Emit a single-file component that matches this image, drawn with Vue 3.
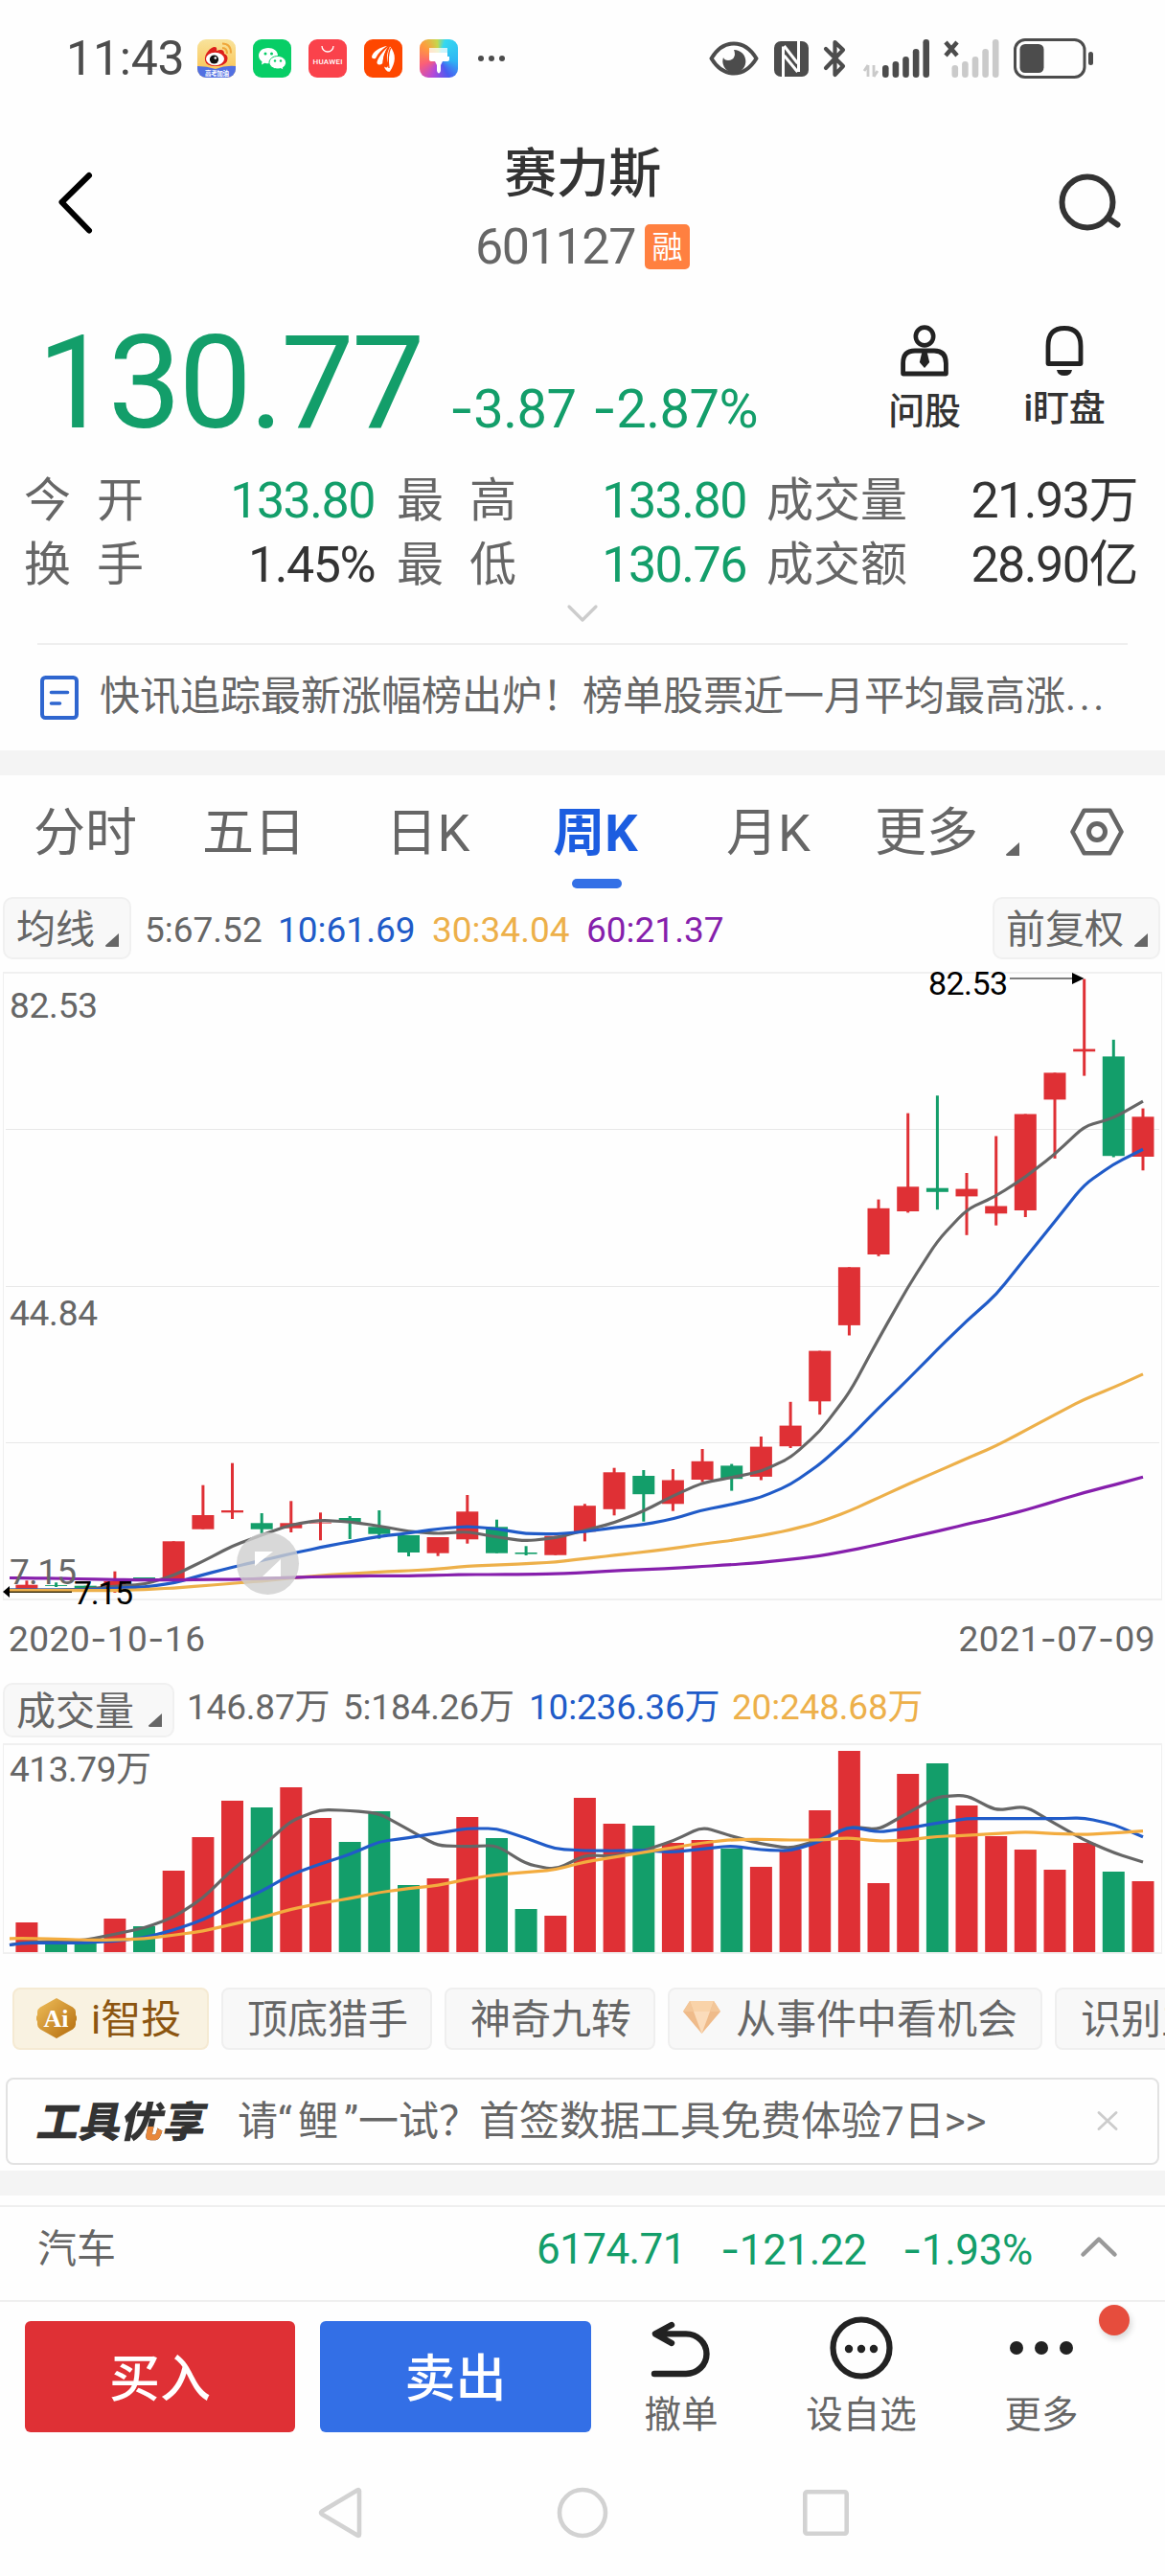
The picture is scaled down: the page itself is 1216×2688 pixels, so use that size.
<script setup>
import { h } from 'vue'

/* Figures: the minus sign is drawn with a wider dash than the digits' own font has. */
const Num = (props) =>
  h('span', { class: 'num' }, props.v.split(/(-)/).filter(Boolean).map((s) => (s === '-' ? h('span', { class: 'num-dash' }, s) : s)))
Num.props = ['v']

const RED = '#df3035'
const GREEN = '#139e6a'
const STEP = 30.66
const X0 = 27.9
const cx = (i) => +(X0 + i * STEP).toFixed(1)

/* colour, body top, body bottom, wick top, wick bottom */
const candles = [
  ['r', 639.7, 644, 635.3, 644], ['g', 640, 640.9, 637.3, 642], ['g', 640.7, 643, 640.7, 643],
  ['r', 636, 642.7, 625.7, 648], ['g', 632, 633.4, 632, 633], ['r', 594.3, 634, 594.3, 634],
  ['r', 567, 581.7, 535.7, 581.7], ['r', 562, 564.3, 512.7, 571], ['g', 575.3, 581.7, 565, 586],
  ['r', 575.3, 580.7, 552.3, 585], ['r', 574.7, 575.6, 564.3, 593.3], ['g', 570, 574.7, 568, 592],
  ['g', 579.3, 586.7, 562, 591.7], ['g', 588, 606, 588, 610], ['r', 590, 606.7, 590, 609.7],
  ['r', 563.3, 592.3, 546, 596.7], ['g', 579.3, 606.7, 571.7, 606.7], ['g', 606, 607.6, 599.3, 609],
  ['r', 588.7, 608.7, 588.7, 608.7], ['r', 557.2, 584.3, 555.3, 594.4], ['r', 522.3, 560.8, 517.7, 567.3],
  ['g', 526, 545.2, 520, 573.7], ['r', 530.5, 555.3, 519, 562.7], ['r', 510.8, 530, 498, 532.4],
  ['g', 515.4, 529.2, 513.6, 541.6], ['r', 495.6, 526.9, 485, 530.5], ['r', 473.6, 495.2, 448.8, 497],
  ['r', 395.6, 448.3, 395.6, 462.1], ['r', 308.3, 368.9, 308.3, 379.5], ['r', 246.8, 295, 237.6, 296.8],
  ['r', 224.3, 250, 147.6, 251.4], ['g', 225.7, 229.8, 129.2, 248.2], ['r', 226.6, 234.4, 210, 274.8],
  ['r', 244.5, 252.3, 171.5, 264.7], ['r', 148.5, 249, 148.5, 256], ['r', 105.4, 133.4, 105.4, 194.9],
  ['r', 80.6, 83.3, 7.6, 108.6], ['g', 88.4, 192.2, 70.9, 193.5], ['r', 151.3, 193, 142.6, 207.3],
].map(([c, top, bottom, high, low], i) => ({ color: c === 'r' ? RED : GREEN, top, bottom, high, low, x: cx(i) }))

/* Line through the points with slightly rounded corners. */
function curve(ys, startY) {
  const pts = [[10, startY], ...ys.map((y, i) => [cx(i), y])]
  const t = 0.3
  const mix = (a, b) => [a[0] + (b[0] - a[0]) * t, a[1] + (b[1] - a[1]) * t].map((n) => n.toFixed(1)).join(' ')
  let d = `M${pts[0].join(' ')}`
  for (let i = 1; i < pts.length - 1; i++) {
    d += `L${mix(pts[i], pts[i - 1])}Q${pts[i].join(' ')} ${mix(pts[i], pts[i + 1])}`
  }
  return d + `L${pts[pts.length - 1].join(' ')}`
}

const priceLines = [
  { color: '#666666', d: curve([645, 645, 644.3, 641.3, 639.3, 630, 615, 599.3, 587.7, 577, 572.3, 574, 578.3, 584, 586.3, 584.3, 590, 594, 590.7, 582.9, 575, 562.7, 547, 533.3, 527.8, 521.4, 507.1, 479.6, 439.6, 383.2, 329, 280.8, 248.2, 233.9, 214.2, 190.3, 161.4, 152.7, 135.2], 645) },
  { color: '#205bc8', d: curve([645, 645, 645, 643.3, 642, 638, 629.3, 621.3, 614.3, 607.3, 600.7, 594.7, 589.3, 585.7, 581.3, 578.7, 581.3, 586.3, 586.7, 584.3, 580.1, 576.9, 570.9, 561.8, 555.8, 548.4, 535.1, 514, 486.5, 455.2, 425.4, 394.2, 364.3, 337.2, 298.7, 260.6, 222, 200.9, 185.3], 645) },
  { color: '#edb04a', d: curve([645.7, 645.7, 645.7, 645.7, 644.7, 643, 640.7, 638.3, 635.7, 632.7, 630, 628, 626.3, 625, 623.3, 620.3, 619, 617.7, 616, 612.3, 609, 605.4, 601.7, 597.1, 593.4, 588.4, 582.4, 574.2, 562.7, 548.9, 534.7, 521.4, 508, 494.7, 478.7, 462.1, 446.1, 433.7, 419.9], 645.7) },
  { color: '#861fac', d: curve([632.8, 633, 633.7, 634.3, 634.7, 634.7, 634.3, 634, 633.3, 632, 631.3, 630.7, 630.3, 630.3, 629.7, 629, 629, 628.7, 628.3, 626.9, 625.1, 623.8, 622.4, 620.5, 618.7, 616.4, 613.2, 609.5, 604, 597.6, 590.7, 583.8, 576.5, 569.6, 561.8, 552.6, 543.4, 535.6, 527.3], 632.5) },
]

const volTops = [186, 205, 206, 182, 190, 132, 97, 59, 66, 45, 77, 102, 70, 147, 140, 76, 98, 172, 179, 56, 83, 85, 103, 100, 109, 128, 110, 69, 7, 145, 31, 20, 64, 96, 110, 131, 103, 133, 143]
const volumes = volTops.map((top, i) => ({ top, x: cx(i), color: candles[i].color }))
const scale = (a) => a.map((v) => +(v / 3 - 80).toFixed(1))
const volLines = [
  { color: '#666666', d: curve(scale([860, 858, 853, 835, 815, 782, 722, 632, 562, 480, 445, 448, 457, 508, 558, 560, 557, 615, 633, 588, 590, 573, 543, 499, 528, 552, 566, 540, 497, 508, 455, 404, 400, 448, 434, 488, 540, 580, 609]), 209.5) },
  { color: '#205bc8', d: curve(scale([862, 862, 862, 856, 846, 822, 790, 742, 700, 648, 615, 585, 545, 533, 518, 504, 504, 534, 568, 573, 574, 572, 578, 568, 558, 571, 574, 545, 497, 516, 503, 487, 473, 473, 473, 473, 471, 491, 530]), 209.5) },
  { color: '#f3ac3f', d: curve(scale([848, 850, 853, 853, 849, 838, 825, 804, 783, 757, 738, 723, 704, 692, 682, 663, 648, 641, 633, 608, 594, 578, 564, 549, 539, 538, 540, 540, 533, 544, 540, 529, 526, 520, 515, 520, 523, 518, 512]), 202.8) },
]

const stats = [
  ['今开', '133.80', 'green'], ['最高', '133.80', 'green'], ['成交量', '21.93万', 'dark'],
  ['换手', '1.45%', 'dark'], ['最低', '130.76', 'green'], ['成交额', '28.90亿', 'dark'],
]
const bars = [[0, 27], [10.6, 23], [21.2, 18], [31.8, 10], [42.4, 0]]
</script>

<template>
  <div class="app">
    <div class="status">
      <span class="clock">11:43</span>
      <div class="apps">
        <svg width="40" height="40" viewBox="0 0 40 40">
          <defs>
            <clipPath id="wb"><rect width="40" height="40" rx="9" /></clipPath>
            <linearGradient id="wbg" x2="0" y2="1"><stop stop-color="#f8e39c" /><stop offset="1" stop-color="#fbc04a" /></linearGradient>
          </defs>
          <g clip-path="url(#wb)">
            <rect width="40" height="40" fill="url(#wbg)" />
            <path d="M8 22C7 15 14 8 18 8q3 0 2 4 8-3 8 3 5 2 3 8-3 5-12 5-10 0-11-6z" fill="#dd1f1b" />
            <ellipse cx="18.500" cy="20.500" rx="9.500" ry="6.800" fill="#fff" />
            <circle cx="17.500" cy="21" r="4.600" fill="#111" /><circle cx="18.800" cy="19.500" r="1.300" fill="#fff" />
            <path d="M26 9q5 0 5 6M26 4.500q9 0 9 10" fill="none" stroke="#efa63a" stroke-width="2" />
            <path d="M0 28q10 0 19 3 10-4 21-3v12H0z" fill="#5270e2" />
            <text x="8" y="38" font-size="6.500" fill="#fff" font-weight="700" textLength="25">高考加油</text>
          </g>
        </svg>
        <svg width="40" height="40" viewBox="0 0 40 40">
          <rect width="40" height="40" rx="9" fill="#07ce66" />
          <path d="M16 9c-6 0-10 3.600-10 8 0 2.500 1.300 4.700 3.500 6.200L9 26.500l3.300-1.800q2 .6 4 .6C22 25 26 22 26 17s-4.500-8-10-8z" fill="#fff" />
          <path d="M26 17.500c-5 0-9 3-9 6.800s4 6.700 9 6.700q1.400 0 2.800-.4L32 32l-.6-2.500c2-1.300 3.200-3 3.200-5.200 0-3.800-4-6.800-8.600-6.800z" fill="#fff" stroke="#07ce66" stroke-width="1" />
          <g fill="#07ce66"><circle cx="13" cy="15" r="1.500" /><circle cx="19.500" cy="15" r="1.500" /><circle cx="23" cy="22.500" r="1.200" /><circle cx="29" cy="22.500" r="1.200" /></g>
        </svg>
        <svg width="40" height="40" viewBox="0 0 40 40">
          <rect width="40" height="40" rx="9" fill="#fa424b" />
          <path d="M14 7a6 6 0 0 0 12 0" fill="none" stroke="#fff" stroke-width="1.300" />
          <text x="4.500" y="26" font-size="8" font-weight="500" fill="#fff" textLength="31">HUAWEI</text>
        </svg>
        <svg width="40" height="40" viewBox="0 0 40 40">
          <rect width="40" height="40" rx="9" fill="#fe4700" />
          <path d="M24 7C17 8 9 13 8 18q0 3 4 2C15 14 19 10 24 7z" fill="#fff" />
          <path d="M25.500 7.500C20 12 13 21 13.500 25q2 3 6 0C20 18 22 12 25.500 7.500z" fill="#fff" />
          <path d="M27 7.500c-3 7-4 11-2 17 .5 5-1 6-4 4 1 4 4 6 6 5 6-9 7-18 0-26z" fill="#fff" />
          <path d="M25.500 8Q20 16 20 27M27.500 9Q24 18 26 30" fill="none" stroke="#fe4700" stroke-width="1.300" />
        </svg>
        <div class="theme">
          <svg width="40" height="40" viewBox="0 0 40 40"><path d="M10 9h19v6H10z" fill="#fff" opacity=".75" /><path d="M10 14h19v4h2v3q0 2-3 2h-4l-2 4v6q-2 5-4 0v-6l-2-4h-3q-3 0-3-2v-3z" fill="#fff" /></svg>
        </div>
      </div>
      <svg class="more-dots" width="30" height="8" viewBox="0 0 30 8"><g fill="#4c4c4c"><circle cx="4" cy="4" r="3" /><circle cx="15" cy="4" r="3" /><circle cx="26" cy="4" r="3" /></g></svg>
      <div class="sys">
        <svg width="52" height="36" viewBox="0 0 52 36"><path d="M2.500 18Q12 2.500 26 2.500T49.500 18Q40 33.500 26 33.500T2.500 18z" fill="none" stroke="#4c4c4c" stroke-width="4" stroke-linejoin="round" /><path d="M26 9a12 12 0 1 1-11 8q1 3 5 3 6 0 7-6 0-3-1-5z" fill="#4c4c4c" /></svg>
        <svg class="nfc" width="36" height="37" viewBox="0 0 36 37"><rect width="36" height="37" rx="7" fill="#4c4c4c" /><path d="M10 37V5.500M10 5.500V34M11 5l14 18M11 15l14 17M26 32V0" transform="translate(-.5)" fill="none" stroke="#fff" stroke-width="3" /></svg>
        <svg class="bt" width="26" height="40" viewBox="0 0 26 40"><path d="M3 10l18 18-8.500 9V3L21 11 3 30" fill="none" stroke="#4c4c4c" stroke-width="4.200" stroke-linejoin="round" stroke-linecap="round" /></svg>
        <svg class="sig" width="71" height="40" viewBox="0 0 71 40">
          <path d="M6 27v12M6 27l-4 6M12 27v12M12 39l4-6" stroke="#cacaca" stroke-width="2.800" fill="none" />
          <rect v-for="[x, y] in bars" :key="x" :x="21 + x" :y="y" width="6.600" :height="40 - y" rx="3.300" fill="#4c4c4c" />
        </svg>
        <svg class="sig2" width="58" height="40" viewBox="0 0 58 40">
          <path d="M2 3l12 14M14 3L2 17" stroke="#4c4c4c" stroke-width="4.500" />
          <rect v-for="[x, y] in bars" :key="x" :x="8.500 + x" :y="y" width="6.600" :height="40 - y" rx="3.300" fill="#cacaca" />
        </svg>
        <svg class="bat" width="84" height="42" viewBox="0 0 84 42"><rect x="1.500" y="1.500" width="72.500" height="39" rx="10.500" fill="none" stroke="#4c4c4c" stroke-width="3" /><rect x="6.500" y="6" width="25" height="30" rx="5.500" fill="#4c4c4c" /><rect x="78" y="14" width="5" height="14" rx="2.500" fill="#4c4c4c" /></svg>
      </div>
    </div>

    <header class="header">
      <svg class="back" width="40" height="70" viewBox="0 0 40 70"><path d="M34 7L5.500 35 34 64.500" fill="none" stroke="#000" stroke-width="6" stroke-linecap="round" stroke-linejoin="round" /></svg>
      <div class="titles">
        <h1>赛力斯</h1>
        <div class="code"><span>601127</span><i>融</i></div>
      </div>
      <svg class="search" width="70" height="70" viewBox="0 0 70 70"><circle cx="33" cy="35" r="26.500" fill="none" stroke="#333" stroke-width="6" /><path d="M54.500 51.500l10 7" stroke="#333" stroke-width="6" stroke-linecap="round" /></svg>
    </header>

    <section class="quote">
      <span class="price">130.77</span>
      <Num class="chg" v="-3.87" />
      <Num class="pct" v="-2.87%" />
      <div class="tool ask">
        <svg width="50" height="54" viewBox="0 0 50 54"><ellipse cx="25" cy="12" rx="9.200" ry="9.400" fill="none" stroke="#222" stroke-width="4.600" /><path d="M2.600 51V40Q2.600 27 15 27H35Q47.400 27 47.400 40V51z" fill="none" stroke="#222" stroke-width="4.800" stroke-linejoin="round" /><path d="M22.500 28h5l2.700 11L25 45l-5.200-6z" fill="#222" /></svg>
        <span>问股</span>
      </div>
      <div class="tool watch">
        <svg width="50" height="54" viewBox="0 0 50 54"><path d="M8 40.500V22Q8 3.500 25 3.500T42 22V40.500z" fill="none" stroke="#222" stroke-width="4.800" stroke-linejoin="round" /><path d="M17 47h16q-1 6-8 6t-8-6z" fill="#222" /></svg>
        <span>i盯盘</span>
      </div>
    </section>

    <section class="stats">
      <template v-for="[label, value, tone] in stats" :key="label">
        <span class="lab"><b v-for="c in label" :key="c">{{ c }}</b></span>
        <span class="val" :class="tone">{{ value }}</span>
      </template>
    </section>
    <div class="expand"><svg width="34" height="20" viewBox="0 0 34 20"><path d="M3 3l14 14L31 3" fill="none" stroke="#ccc" stroke-width="3.200" stroke-linecap="round" stroke-linejoin="round" /></svg></div>

    <section class="news">
      <svg width="40" height="46" viewBox="0 0 40 46"><rect x="2" y="2" width="36" height="42" rx="3.500" fill="none" stroke="#2f66cf" stroke-width="4" /><path d="M11.500 17.500h17M11.500 29h9" stroke="#2f66cf" stroke-width="3.600" stroke-linecap="round" /></svg>
      <p>快讯追踪最新涨幅榜出炉！榜单股票近一月平均最高涨<em>...</em></p>
    </section>
    <div class="band"></div>

    <nav class="tabs">
      <span>分时</span><span>五日</span><span class="k">日K</span><span class="on">周K</span><span>月K</span><span>更多</span>
      <div class="tab-end">
        <svg class="tri" width="14" height="14" viewBox="0 0 14 14"><path d="M14 0V14H1.500Q0 14 0 12.500z" fill="#666" /></svg>
        <svg class="hex" width="56" height="50" viewBox="0 0 56 50"><path d="M2.500 25L14.500 2.800H41.500L53.500 25 41.500 47.200H14.500z" fill="none" stroke="#666" stroke-width="4.600" stroke-linejoin="round" /><circle cx="28" cy="25" r="8.500" fill="none" stroke="#666" stroke-width="5" /></svg>
      </div>
    </nav>

    <div class="legend">
      <div class="pill"><span>均线</span><svg width="14" height="14" viewBox="0 0 14 14"><path d="M14 0V14H1.500Q0 14 0 12.500z" fill="#666" /></svg></div>
      <span class="n a1">5:67.52</span><span class="n a2 blue">10:61.69</span><span class="n a3 gold">30:34.04</span><span class="n a4 purple">60:21.37</span>
      <div class="pill adj"><span>前复权</span><svg width="14" height="14" viewBox="0 0 14 14"><path d="M14 0V14H1.500Q0 14 0 12.500z" fill="#666" /></svg></div>
    </div>

    <svg class="chart" width="1216" height="657" viewBox="0 0 1216 657">
      <path d="M3.500 1V655M1212.500 1V655" stroke="#f0f0f0" stroke-width="1" />
      <path d="M3 1H1213M3 655H1213" stroke="#f0f0f0" stroke-width="2" />
      <path d="M6 164.500H1210M6 328.500H1210M6 491.500H1210" stroke="#e8e8e8" stroke-width="1.200" />
      <g v-for="c in candles" :key="c.x" :fill="c.color">
        <rect :x="c.x - 1.500" :y="c.high" width="3" :height="c.low - c.high" />
        <rect :x="c.x - 11.500" :y="c.top" width="23" :height="c.bottom - c.top" />
      </g>
      <path v-for="l in priceLines" :key="l.color" :d="l.d" :stroke="l.color" fill="none" stroke-width="3.200" stroke-linejoin="round" />
      <g class="axis">
        <text x="10" y="47.500" textLength="92">82.53</text>
        <text x="10" y="368.500" textLength="92">44.84</text>
        <text x="10" y="639" textLength="70">7.15</text>
      </g>
      <path d="M10 647.300H75" stroke="#3c2f10" stroke-width="1.500" /><path d="M3 647l7-6v12z" />
      <text class="mark" x="77" y="660" textLength="62">7.15</text>
      <text class="mark" x="969" y="24" textLength="83">82.53</text>
      <path d="M1054 7H1120" stroke="#555" stroke-width="1.500" /><path d="M1131.500 7l-12.500-6v12z" />
      <circle cx="279.500" cy="617.500" r="32.500" fill="#cecece" fill-opacity=".8" />
      <path d="M266 605h19l-19 15zM293 613v18h-19z" fill="#fff" />
    </svg>
    <div class="dates"><Num v="2020-10-16" /><Num v="2021-07-09" /></div>

    <div class="legend vol">
      <div class="pill"><span>成交量</span><svg width="14" height="14" viewBox="0 0 14 14"><path d="M14 0V14H1.500Q0 14 0 12.500z" fill="#666" /></svg></div>
      <span class="n b1">146.87万</span><span class="n b2">5:184.26万</span><span class="n b3 blue">10:236.36万</span><span class="n b4 gold">20:248.68万</span>
    </div>
    <svg class="chart" width="1216" height="221" viewBox="0 -1 1216 221">
      <path d="M3.500 0V218M1212.500 0V218" stroke="#f0f0f0" stroke-width="1" />
      <path d="M3 0H1213M3 218H1213" stroke="#f0f0f0" stroke-width="2" />
      <rect v-for="b in volumes" :key="b.x" :x="b.x - 11.500" :y="b.top" width="23" :height="217 - b.top" :fill="b.color" />
      <path v-for="l in volLines" :key="l.color" :d="l.d" :stroke="l.color" fill="none" stroke-width="3.200" stroke-linejoin="round" />
      <text class="vlab" x="10" y="38.500" textLength="148">413.79万</text>
    </svg>

    <div class="tags">
      <div class="tag t1 gold-tag">
        <svg width="42" height="42" viewBox="0 0 42 42"><defs><linearGradient id="ai" x2="1" y2="1"><stop stop-color="#f0bf5b" /><stop offset="1" stop-color="#b26a0b" /></linearGradient></defs><path d="M21 0l17 9.500q3 2 3 5v3l1 2v3l-1 2v3q0 3-3 5L21 42 4 32.500q-3-2-3-5v-3l-1-2v-3l1-2v-3q0-3 3-5z" fill="url(#ai)" /><text x="7.500" y="29.500" font-family="Liberation Serif, serif" font-weight="700" font-size="26" fill="#fff">Ai</text></svg>
        <span>i智投</span>
      </div>
      <div class="tag t2">顶底猎手</div>
      <div class="tag t3">神奇九转</div>
      <div class="tag t4">
        <svg width="39" height="34" viewBox="0 0 39 34"><path d="M7 0H32L39 11 19.500 34 0 11z" fill="#efbb8a" /><path d="M7 0H32L28 11H11z" fill="#f9d3a9" /><path d="M11 11H28L19.500 34z" fill="#fbdcbb" /><path d="M0 11L7 0l4 11zM39 11L32 0l-4 11z" fill="#f3c698" /></svg>
        <span>从事件中看机会</span>
      </div>
      <div class="tag t5">识别主力</div>
    </div>

    <div class="ad">
      <div class="brand">工具<span>优</span>享</div>
      <p>请<q>“</q>鲤<q class="r">”</q>一试？首签数据工具免费体验7日&gt;&gt;</p>
      <svg width="22" height="20" viewBox="0 0 22 20"><path d="M2 1.500l18 17M20 1.500L2 18.500" stroke="#ccc" stroke-width="2.800" stroke-linecap="round" /></svg>
    </div>
    <div class="band low"></div>

    <div class="sector">
      <span class="name">汽车</span>
      <Num class="s1" v="6174.71" /><Num class="s2" v="-121.22" /><Num class="s3" v="-1.93%" />
      <svg width="40" height="24" viewBox="0 0 40 24"><path d="M3.500 20.500L20 4.500l16.500 16" fill="none" stroke="#999" stroke-width="4.500" stroke-linecap="round" stroke-linejoin="round" /></svg>
    </div>

    <footer class="bar">
      <button class="buy">买入</button>
      <button class="sell">卖出</button>
      <div class="act">
        <svg width="70" height="70" viewBox="0 0 70 70"><path d="M7 62H40a21.500 20.800 0 0 0 0-41.600H9M25 11L8 20.400 25 30" fill="none" stroke="#222" stroke-width="6.400" stroke-linecap="round" stroke-linejoin="round" /></svg>
        <span>撤单</span>
      </div>
      <div class="act">
        <svg width="70" height="70" viewBox="0 0 70 70"><circle cx="35" cy="35" r="29.500" fill="none" stroke="#222" stroke-width="6.200" /><g fill="#222"><circle cx="22" cy="36" r="4.200" /><circle cx="35" cy="36" r="4.200" /><circle cx="48" cy="36" r="4.200" /></g></svg>
        <span>设自选</span>
      </div>
      <div class="act">
        <svg width="70" height="70" viewBox="0 0 70 70"><g fill="#222"><circle cx="9" cy="35" r="7" /><circle cx="35" cy="35" r="7" /><circle cx="61" cy="35" r="7" /></g></svg>
        <span>更多</span>
        <i class="badge"></i>
      </div>
    </footer>

    <div class="sysnav">
      <svg width="46" height="54" viewBox="0 0 46 54"><path d="M43 4.500V49.500Q43 51.500 41 50.500L4 28.500Q2 27 4 25.500L41 3.500Q43 2.500 43 4.500z" fill="none" stroke="#d2d2d2" stroke-width="4.600" stroke-linejoin="round" /></svg>
      <svg width="54" height="54" viewBox="0 0 54 54"><circle cx="27" cy="27" r="24" fill="none" stroke="#d2d2d2" stroke-width="4.600" /></svg>
      <svg width="48" height="48" viewBox="0 0 48 48"><rect x="2.300" y="2.300" width="43.400" height="43.400" rx="2" fill="none" stroke="#d2d2d2" stroke-width="4.600" /></svg>
    </div>
  </div>
</template>

<style>
.num-dash { font-family: Inter, sans-serif; }
</style>

<style scoped>
.app { width: 1216px; height: 2688px; overflow: hidden; background: #fefefe; color: #666; font-family: Roboto, "Noto Sans CJK SC", sans-serif; display: flex; flex-direction: column; }
.app > * { flex: none; }
svg { display: block; flex: none; }
p, h1 { margin: 0; font-weight: 400; }
b, em, i { font-weight: inherit; font-style: normal; }
.green { color: #139e6a; }
.dark { color: #333; }
.blue { color: #205bc8; }
.gold { color: #edb04a; }
.purple { color: #861fac; }

.status { height: 122px; display: flex; align-items: center; }
.clock { width: 137px; margin-left: 69px; font-size: 50px; letter-spacing: -.2px; color: #4c4c4c; }
.apps { display: flex; gap: 18px; }
.theme { width: 40px; height: 40px; border-radius: 9px; background: conic-gradient(from 20deg, #35d8f0, #2fb4f4 80deg, #4a5cf0 130deg, #b548d8 180deg, #fb5e78 230deg, #ff9a3d 290deg, #c5d84c 335deg, #35d8f0); }
.more-dots { margin-left: 20px; }
.sys { margin-left: 212px; display: flex; align-items: center; }
.nfc { margin-left: 16px; }
.bt { margin-left: 15px; }
.sig { margin-left: 15px; }
.sig2 { margin-left: 14px; }
.bat { margin-left: 15px; }

.header { height: 190px; display: flex; align-items: flex-start; }
.back { margin: 54px 0 0 59px; }
.titles { flex: 1; display: flex; flex-direction: column; align-items: center; padding: 19px 0 0 15px; }
h1 { font-size: 55px; line-height: 80px; color: #333; font-weight: 500; letter-spacing: -.5px; }
.code { display: flex; align-items: center; height: 72px; font-size: 52px; letter-spacing: -1.400px; }
.code i { margin-left: 10px; width: 47px; height: 47px; border-radius: 5px; background: #ff8040; color: #fff; font-size: 32px; line-height: 48px; text-align: center; letter-spacing: 0; }
.search { margin: 54px 44px 0 0; }

.quote { height: 175px; display: flex; align-items: baseline; color: #139e6a; padding-left: 39px; }
.price { font-size: 136px; line-height: 136px; letter-spacing: -2.700px; width: 430px; margin-top: 20px; }
.chg, .pct { font-size: 56px; letter-spacing: -.5px; }
.chg { width: 149px; }
.pct { width: 307px; }
.tool { align-self: flex-start; width: 100px; margin-top: 27px; display: flex; flex-direction: column; align-items: center; color: #333; font-size: 38px; line-height: 50px; font-weight: 500; white-space: nowrap; letter-spacing: -.3px; }
.ask { margin-left: -10px; }
.ask span { margin-top: 11px; }
.watch { margin-left: 46px; }
.watch span { margin-top: 8px; }

.stats { display: grid; grid-template-columns: 125px 241px 148px 240px 168px 240px; padding: 2px 0 0 25px; height: 133px; grid-auto-rows: 66.5px; }
.lab { display: flex; justify-content: space-between; font-size: 49px; line-height: 67px; }
.lab:nth-child(6n + 3) { padding-left: 23px; }
.lab:nth-child(6n + 5) { padding-left: 21px; }
.val { text-align: right; font-size: 52px; line-height: 67px; letter-spacing: -1.500px; }
.expand { height: 49px; display: flex; justify-content: center; }
.expand svg { margin-top: 8px; }

.news { margin: 0 39px; height: 110px; border-top: 2px solid #efefef; display: flex; }
.news svg { margin: 32px 0 0 3px; }
.news p { margin-left: 22px; font-size: 42px; line-height: 60px; margin-top: 24px; white-space: nowrap; }
.news em { letter-spacing: 3.600px; }
.band { height: 26px; background: #f4f4f4; }

.tabs { height: 121px; display: grid; grid-template-columns: 178px 174px 194px 154px 204px 126px 186px; font-size: 54px; text-align: center; }
.tabs > span { line-height: 122px; position: relative; }
.tabs .k { padding-right: 5px; }
.tabs .on { color: #1c5de0; font-weight: 700; padding-right: 3px; }
.on::after { content: ""; position: absolute; left: 51px; bottom: 4px; width: 52px; height: 10px; border-radius: 5px; background: #3370e6; }
.tab-end { display: flex; }
.tri { margin: 70px 0 0 20px; }
.hex { margin: 34px 0 0 53px; }

.legend { height: 84px; display: flex; align-items: flex-start; padding-left: 3px; }
.pill { margin-top: 6px; width: 134px; height: 65px; box-sizing: border-box; border: 2px solid #f0f0f0; border-radius: 10px; background: #f8f8f8; display: flex; font-size: 41px; line-height: 64px; padding: 0 11px 0 12px; justify-content: space-between; white-space: nowrap; }
.pill svg { margin-top: 36px; }
.n { font-size: 37px; line-height: 82px; white-space: nowrap; }
.a1 { margin-left: 14px; width: 139px; }
.a2 { width: 161px; }
.a3 { width: 161px; }
.a4 { width: 424px; }
.adj { width: 175px; }

.chart { font-size: 37px; overflow: visible; }
.axis, .vlab { fill: #666; }
.mark { fill: #000; font-size: 34px; }
.dates { height: 84px; line-height: 78px; display: flex; justify-content: space-between; padding: 0 10px 0 9px; font-size: 37px; letter-spacing: .5px; }

.vol { height: 64px; }
.vol .pill { margin-top: 1px; width: 179px; height: 57px; line-height: 57px; padding-left: 12px; }
.vol .pill svg { margin-top: 30px; }
.vol .n { line-height: 54px; font-size: 37px; letter-spacing: -.2px; }
.b1 { margin-left: 13px; width: 163px; }
.b2 { width: 194px; }
.b3 { width: 212px; }

.tags { margin-top: 34px; height: 65px; padding-left: 13px; display: flex; gap: 13px; font-size: 42px; line-height: 64px; white-space: nowrap; }
.tag { box-sizing: border-box; flex: none; border: 2px solid #efefef; border-radius: 8px; background: #f8f8f8; display: flex; }
.t1 { width: 205px; padding-left: 23px; }
.t1 svg { margin-top: 9px; }
.t1 span { margin-left: 15px; }
.gold-tag { background: #f9f2e1; border-color: #f5ead3; color: #8c5510; }
.t2, .t3 { width: 220px; padding-left: 25px; }
.t4 { width: 391px; padding-left: 14px; }
.t4 svg { margin-top: 12px; }
.t4 span { margin-left: 16px; }
.t5 { width: 220px; padding-left: 25px; }

.ad { margin: 29px 6px 0; width: 1204px; height: 91px; box-sizing: border-box; border: 2px solid #e2e2e2; border-radius: 8px; display: flex; align-items: center; }
.brand { margin: 3px 0 0 32px; width: 208px; font-size: 44px; font-weight: 900; color: #333; transform: skewX(-12deg); line-height: 60px; }
.brand span { color: transparent; background: linear-gradient(#e8873a, #e8873a) 26px 30px / 20px 40px no-repeat, #333; -webkit-background-clip: text; background-clip: text; }
.ad p { font-size: 42px; line-height: 60px; width: 897px; white-space: nowrap; margin-top: 1px; }
.ad q { quotes: none; display: inline-block; width: 21px; }
.ad q::before, .ad q::after { content: none; }
.ad .r { text-align: right; }
.ad svg { margin-top: -1px; }
.low { margin-top: 6px; }

.sector { margin-top: 10px; border-top: 2px solid #efefef; border-bottom: 2px solid #efefef; height: 97px; display: flex; line-height: 88px; color: #139e6a; font-size: 44px; }
.name { margin-left: 39px; width: 521px; font-size: 41px; color: #666; }
.s1 { width: 192px; letter-spacing: -.6px; }
.s2 { width: 190px; letter-spacing: -.4px; }
.s3 { width: 185px; letter-spacing: -.4px; }
.sector svg { margin-top: 29px; }

.bar { height: 156px; display: flex; padding-left: 26px; }
.bar button { box-sizing: border-box; margin: 20px 0 0; padding: 6px 0 0; border: 0; width: 282px; height: 116px; border-radius: 6px; color: #fff; background: #df3035; font: 500 53px/108px Roboto, "Noto Sans CJK SC", sans-serif; }
.bar .sell { margin-left: 26px; width: 283px; background: #336fe6; }
.act { width: 188px; display: flex; flex-direction: column; align-items: center; position: relative; font-size: 38.500px; line-height: 50px; }
.act svg { margin-top: 13px; }
.act span { margin-top: 10px; }
.badge { position: absolute; left: 154px; top: 3px; width: 32px; height: 32px; border-radius: 50%; background: #e64d3d; box-shadow: 2px 4px 6px rgba(0, 0, 0, .15); }

.sysnav { flex: 1 !important; display: flex; align-items: center; padding: 0 0 2px 332px; }
.sysnav svg + svg { margin-left: 203px; }
</style>
